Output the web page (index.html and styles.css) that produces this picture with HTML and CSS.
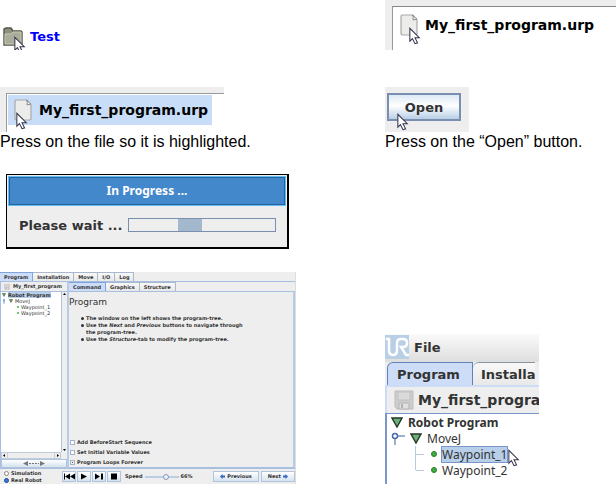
FILE: index.html
```
<!DOCTYPE html>
<html lang="en">

<head>
    <meta charset="UTF-8">
    <meta name="viewport" content="width=device-width, initial-scale=1.0">
    <link rel="stylesheet" href="styles.css">
    <title>Loading a program</title>
</head>

<body>
    <svg class="sprites" width="0" height="0">
        <symbol id="cursor" viewBox="0 0 14 20">
            <path d="M1 1v15l3-3 3 6 3-1-3-6h5z" fill="#fff" stroke="#33334d" stroke-width="1.2" />
        </symbol>
        <symbol id="page" viewBox="0 0 18 22">
            <path d="M2 1h11l4 5v14l-1 1H2l-1-1V2z" fill="#ececea" stroke="#aaa" stroke-width="1.2" />
            <path d="M12 1c2 1 1 4 1 5l4-1z" fill="#fff" stroke="#888" />
        </symbol>
        <symbol id="triangle" viewBox="0 0 12 11">
            <path d="M1 1h10L6 10z" fill="#6fae78" stroke="#1f3824" stroke-width="1.4" />
        </symbol>
        <symbol id="disk" viewBox="0 0 20 20">
            <path d="M1 1h18v18H3l-2-2z" fill="#cdcdcd" stroke="#bdbdbd" />
            <path d="M4 2h12v8H4z" fill="#dadada" stroke="#c2c2c2" />
            <path d="M5 13h10v6H5z" fill="#e0e0e0" stroke="#b4b4b4" />
            <path d="M7 14h2v4H7z" fill="#b4b4b4" />
        </symbol>
    </svg>

    <main class="steps">
        <section class="step">
            <div class="folder">
                <svg class="folder-icon" viewBox="0 0 20 20">
                    <path d="M1 18V2l2-1h5l2 3h8l1 1v13z" fill="#8d917d" stroke="#55584b" stroke-width="1.4" />
                    <path d="M2 7h6l2-2h8v12H2z" fill="#a9ad98" stroke="#c9ccba" />
                </svg>
                <svg class="cursor"><use href="#cursor" /></svg>
                <a class="folder-link" href="#">Test</a>
            </div>
        </section>

        <section class="step">
            <div class="file-list wide">
                <div class="file">
                    <svg class="page-icon"><use href="#page" /></svg>
                    <svg class="cursor"><use href="#cursor" /></svg>
                    <span>My_first_program.urp</span>
                </div>
            </div>
        </section>

        <section class="step">
            <div class="file-list">
                <div class="file selected">
                    <svg class="page-icon"><use href="#page" /></svg>
                    <svg class="cursor"><use href="#cursor" /></svg>
                    <span>My_first_program.urp</span>
                </div>
            </div>
            <p class="caption">Press on the file so it is highlighted.</p>
        </section>

        <section class="step">
            <div class="open-area">
                <button class="open">Open</button>
                <svg class="cursor"><use href="#cursor" /></svg>
            </div>
            <p class="caption">Press on the “Open” button.</p>
        </section>

        <section class="step full">
            <div class="dialog">
                <h2 class="dialog-title">In Progress ...</h2>
                <div class="dialog-body">
                    <span>Please wait ...</span>
                    <div class="progress" role="progressbar" aria-label="Please wait">
                        <div class="progress-bar"></div>
                    </div>
                </div>
            </div>
        </section>

        <section class="step">
            <div class="app">
                <nav class="tabs">
                    <button class="tab active">Program</button>
                    <button class="tab">Installation</button>
                    <button class="tab">Move</button>
                    <button class="tab">I/O</button>
                    <button class="tab">Log</button>
                </nav>
                <div class="app-main">
                    <div class="sidebar">
                        <div class="program-name">
                            <svg class="disk"><use href="#disk" /></svg>
                            <span>My_first_program</span>
                        </div>
                        <div class="tree-box">
                            <ul class="tree">
                                <li class="root"><svg class="triangle"><use href="#triangle" /></svg><span class="picked">Robot Program</span></li>
                                <li class="move">
                                    <svg class="handle" viewBox="0 0 5 5"><path d="M1 0h2v3H1zM1.500 3h1v2h-1z" fill="#8fb0e0" /></svg>
                                    <svg class="triangle"><use href="#triangle" /></svg><span>MoveJ</span>
                                </li>
                                <li class="point"><i class="dot"></i><span>Waypoint_1</span></li>
                                <li class="point"><i class="dot"></i><span>Waypoint_2</span></li>
                            </ul>
                            <div class="scroll-y">
                                <svg viewBox="0 0 5 5"><path d="M1 3h3L2.500 1z" /></svg>
                                <svg viewBox="0 0 5 5"><path d="M1 2h3L2.500 4z" /></svg>
                            </div>
                        </div>
                        <div class="scroll-x">
                            <svg viewBox="0 0 5 5"><path d="M3 1v3L1 2.500z" /></svg>
                            <span class="thumb"></span>
                            <svg viewBox="0 0 5 5"><path d="M2 1v3l2-1.500z" /></svg>
                        </div>
                        <button class="resize" aria-label="Resize">
                            <svg viewBox="0 0 22 5">
                                <path d="M5 0v5L0 2.500zM17 0v5l5-2.500z" fill="#777" />
                                <path d="M6 2.500h10" stroke="#777" stroke-dasharray="2 1" />
                            </svg>
                        </button>
                    </div>
                    <div class="content">
                        <nav class="tabs">
                            <button class="tab active">Command</button>
                            <button class="tab">Graphics</button>
                            <button class="tab">Structure</button>
                        </nav>
                        <div class="command">
                            <h1>Program</h1>
                            <ul class="help">
                                <li>The window on the left shows the program-tree.</li>
                                <li>Use the <em>Next</em> and <em>Previous</em> buttons to navigate through<br>the program-tree.</li>
                                <li>Use the <em>Structure</em>-tab to modify the program-tree.</li>
                            </ul>
                            <div class="options">
                                <label><input type="checkbox">Add BeforeStart Sequence</label>
                                <label><input type="checkbox">Set Initial Variable Values</label>
                                <label><input type="checkbox" checked>Program Loops Forever</label>
                            </div>
                        </div>
                    </div>
                </div>
                <footer class="controls">
                    <div class="modes">
                        <label><input type="radio" name="mode">Simulation</label>
                        <label><input type="radio" name="mode" checked>Real Robot</label>
                    </div>
                    <div class="player">
                        <button aria-label="Rewind"><svg viewBox="0 0 12 8"><path d="M1 1h1v6H1zM7 1v6L2 4zM12 1v6L7 4z" /></svg></button>
                        <button aria-label="Play"><svg viewBox="0 0 12 8"><path d="M3 1v6l6-3z" /></svg></button>
                        <button aria-label="Step"><svg viewBox="0 0 12 8"><path d="M2 1v6l5-3zM8 1h2v6H8z" /></svg></button>
                        <button aria-label="Stop"><svg viewBox="0 0 12 8"><path d="M3 1h6v6H3z" /></svg></button>
                    </div>
                    <label class="speed">Speed <input type="range" value="66"> 66%</label>
                    <div class="pager">
                        <button><svg viewBox="0 0 5 5"><path d="M0 2.500L2.500 0v1.500H5v2H2.500V5z" /></svg>Previous</button>
                        <button>Next<svg viewBox="0 0 5 5"><path d="M5 2.500L2.500 0v1.500H0v2h2.500V5z" /></svg></button>
                    </div>
                </footer>
            </div>
        </section>

        <section class="step bottom">
            <div class="closeup">
                <div class="menu">
                    <svg class="logo" viewBox="0 0 24 24">
                        <path d="M0 0h24v24H0z" fill="#b9cfe6" />
                        <path d="M1 4h3v11q0 5 4 5t4-5V8q0-4 4-4h2q4 0 4 4t-4 4h-2l5 8h3" fill="none" stroke="#fff" stroke-width="2.500" />
                    </svg>
                    <span>File</span>
                </div>
                <nav class="tabs">
                    <button class="tab active">Program</button>
                    <button class="tab">Installa</button>
                </nav>
                <div class="program-name">
                    <svg class="disk"><use href="#disk" /></svg>
                    <span>My_first_progra</span>
                </div>
                <ul class="tree">
                    <li class="root"><svg class="triangle"><use href="#triangle" /></svg><span>Robot Program</span></li>
                    <li class="move">
                        <svg class="handle" viewBox="0 0 14 14">
                            <path d="M4 7v7M6 5h8" stroke="#7a96c8" stroke-width="1.500" />
                            <circle cx="4" cy="5" r="2.500" fill="#fff" stroke="#4a6ea9" stroke-width="1.500" />
                        </svg>
                        <svg class="triangle"><use href="#triangle" /></svg><span>MoveJ</span>
                    </li>
                    <li class="point"><i class="dot"></i><span class="picked">Waypoint_1</span><svg class="cursor"><use href="#cursor" /></svg></li>
                    <li class="point"><i class="dot"></i><span>Waypoint_2</span></li>
                </ul>
            </div>
        </section>
    </main>
</body>

</html>
```
FILE: styles.css
```
* {
    margin: 0;
    padding: 0;
    box-sizing: border-box;
}

body {
    background: #fff;
    color: #000;
    font-family: "DejaVu Sans", sans-serif;
    overflow-x: hidden;
}

button {
    font: inherit;
    color: inherit;
}

ul {
    list-style: none;
}

svg {
    display: block;
    flex: none;
}

.sprites {
    position: absolute;
}

.steps {
    display: grid;
    grid-template-columns: 5fr 3fr;
    row-gap: 23px;
}

.step {
    min-width: 0;
}

.step:nth-child(-n+2) {
    padding-bottom: 14px;
}

.full {
    grid-column: 1 / -1;
}

.bottom {
    align-self: end;
}

.cursor {
    position: absolute;
    width: 12px;
    height: 18px;
}

/* file chooser */
.folder {
    position: relative;
    display: flex;
    align-items: center;
    gap: 7px;
    height: 50px;
    padding: 24px 0 0 3px;
    overflow: hidden;
    font-size: 13px;
    font-weight: bold;
    line-height: 22px;
}

.folder-icon {
    width: 20px;
    height: 20px;
}

.folder .cursor {
    left: 14px;
    top: 36px;
}

.folder-link {
    color: #00f;
    text-decoration: none;
}

.file-list {
    width: 224px;
    height: 45px;
    padding: 6px 0 0 6px;
    background: #eee;
}

.file-list.wide {
    width: 100%;
    height: 50px;
}

.file {
    position: relative;
    display: flex;
    align-items: center;
    gap: 7px;
    height: 100%;
    padding: 0 0 6px 7px;
    border-top: 1px solid #999;
    border-left: 1px solid #999;
    background: #fff;
    font-size: 14px;
    font-weight: bold;
    white-space: nowrap;
}

.wide .file {
    border-top-color: #888;
    padding-bottom: 7px;
    margin-left: 1px;
}

.file.selected {
    background: linear-gradient(#c8ddf7, #c8ddf7) 1px 1px / 204px 30px no-repeat #fff;
}

.page-icon {
    width: 18px;
    height: 22px;
}

.file .cursor {
    left: 9px;
    top: 18px;
}

.wide .file .cursor {
    left: 16px;
    top: 20px;
}

.caption {
    font-family: "Liberation Sans", Arial, sans-serif;
    font-size: 16px;
    line-height: 19px;
}

.open-area {
    position: relative;
    width: 84px;
    height: 45px;
    padding: 6px 2px;
    background: #eee;
}

.open {
    width: 74px;
    height: 28px;
    border: 2px solid #7a8eb0;
    background: linear-gradient(#dce8f4, #fff 45%, #b8cfe5);
    color: #333;
    font-size: 13px;
    font-weight: bold;
}

.open-area .cursor {
    left: 12px;
    top: 26px;
}

/* progress dialog */
.dialog {
    width: 283px;
    margin-left: 6px;
    padding: 2px;
    border: 1px solid #000;
    border-right-width: 2px;
    border-bottom-width: 2px;
    background: #eee;
    font-weight: bold;
}

.dialog-title {
    border: 1px solid #2a5f9e;
    outline: 1px solid #5fc0f5;
    background: #4488cc;
    color: #fff;
    font-family: "Noto Sans", sans-serif;
    font-size: 12px;
    line-height: 26px;
    text-align: center;
}

.dialog-body {
    display: flex;
    align-items: center;
    gap: 6px;
    height: 40px;
    padding: 0 9px 0 10px;
    color: #333;
    font-size: 13px;
    white-space: nowrap;
}

.progress {
    flex: 1;
    height: 14px;
    border: 1px solid #7a8fae;
}

.progress-bar {
    width: 24px;
    height: 100%;
    margin-left: 49px;
    background: #a3b8cc;
}

/* tabs and tree, shared by the full window and the close-up */
.tabs {
    display: flex;
}

.tab {
    border: 1px solid #a9b8cc;
    border-width: 1px 1px 0 0;
    background: linear-gradient(#f8f8f8, #e8e8e8);
    color: #333;
}

.tab.active {
    border-color: #7fa3dc;
    background: #cdddf7;
}

.program-name,
.tree li {
    display: flex;
    align-items: center;
    white-space: nowrap;
}

.dot {
    border-radius: 50%;
    background: #3fae3f;
}

.picked {
    background: #b8cfe9;
}

/* full window */
.app {
    width: 296px;
    background: #eee;
    color: #333;
    font-size: 5px;
    line-height: 7px;
    font-weight: bold;
    border-right: 1px solid #ddd;
}

.app .tab {
    height: 9px;
    padding: 0 4px;
    line-height: 8px;
}

.app-main {
    display: flex;
    height: 188px;
    border: 1px solid #a8bfe0;
    border-right: 0;
}

.sidebar {
    display: flex;
    flex-direction: column;
    width: 66px;
}

.app .program-name {
    gap: 3px;
    height: 9px;
    padding-left: 3px;
}

.app .disk {
    width: 6px;
    height: 6px;
}

.tree-box {
    display: flex;
    flex: 1;
    justify-content: space-between;
    border-top: 1px solid #a8bfe0;
    background: #fff;
}

.app .tree {
    padding-left: 1px;
    font-weight: normal;
    line-height: 6px;
}

.app .tree li {
    gap: 2px;
    height: 6px;
}

.app .triangle {
    width: 4px;
    height: 4px;
}

.app .handle {
    width: 5px;
    height: 5px;
}

.app .root {
    font-weight: bold;
}

.app .point {
    padding-left: 15px;
}

.app .dot {
    width: 2px;
    height: 2px;
}

.scroll-y,
.scroll-x {
    display: flex;
    justify-content: space-between;
    background: #eee;
}

.scroll-y {
    flex-direction: column;
    border-left: 1px solid #b0c0d8;
}

.scroll-y svg,
.scroll-x svg {
    width: 5px;
    height: 5px;
}

.scroll-x {
    border: 1px solid #c0cbdc;
    margin-right: 6px;
}

.thumb {
    flex: 1;
    border: 1px solid #ccd;
    border-width: 0 1px;
}

.resize {
    display: flex;
    align-items: center;
    justify-content: center;
    height: 9px;
    border: 1px solid #b0c4de;
    background: linear-gradient(#fff, #d5e2ef);
}

.resize svg {
    width: 22px;
    height: 5px;
}

.content {
    display: flex;
    flex: 1;
    flex-direction: column;
    border-left: 2px solid #b8cbe6;
}

.command {
    display: flex;
    flex: 1;
    flex-direction: column;
    border-top: 1px solid #a8bfe0;
    border-right: 2px solid #b8cbe6;
    border-bottom: 1px solid #a8bfe0;
}

.command h1 {
    padding-top: 4px;
    font-size: 9px;
    font-weight: normal;
    line-height: 12px;
}

.help {
    padding: 7px 0 0 17px;
}

.help li {
    position: relative;
}

.help li::before {
    position: absolute;
    left: -5px;
    top: 2px;
    width: 3px;
    height: 3px;
    border-radius: 50%;
    background: #333;
    content: "";
}

.options {
    display: flex;
    flex-direction: column;
    gap: 3px;
    margin-top: auto;
    padding: 0 0 1px 1px;
}

.options label,
.modes label {
    display: flex;
    align-items: center;
    gap: 2px;
}

.options input,
.modes input {
    appearance: none;
    width: 5px;
    height: 5px;
    border: 1px solid #9fb4d0;
    background: #fff;
}

.options input:checked {
    background: #557;
    background-clip: content-box;
    padding: 1px;
}

.modes input {
    border-color: #888;
    border-radius: 50%;
}

.modes input:checked {
    border-color: #1b4a9e;
    background: #3a78d8;
}

.controls {
    display: flex;
    align-items: center;
    height: 15px;
    padding-left: 4px;
}

.modes {
    width: 58px;
}

.player {
    display: flex;
    gap: 1px;
}

.player button {
    width: 14px;
    height: 11px;
    border: 1px solid #b0c4de;
    background: linear-gradient(#fff, #d5e2ef);
}

.player svg {
    width: 12px;
    height: 9px;
}

.speed {
    display: flex;
    align-items: center;
    gap: 2px;
    margin-left: 4px;
}

.speed input {
    appearance: none;
    width: 34px;
    height: 2px;
    background: #b8cfe5;
}

.speed input::-webkit-slider-thumb {
    appearance: none;
    width: 6px;
    height: 6px;
    border: 1px solid #889bb5;
    border-radius: 50%;
    background: #eef;
}

.pager {
    display: flex;
    gap: 2px;
    margin-left: auto;
}

.pager button {
    display: flex;
    align-items: center;
    gap: 2px;
    height: 11px;
    padding: 0 6px;
    border: 1px solid #b0c4de;
    background: linear-gradient(#fff, #d5e2ef);
}

.pager svg {
    width: 5px;
    height: 5px;
    fill: #3465c0;
}

/* close-up */
.closeup {
    width: 154px;
    overflow: hidden;
    background: #eee;
    color: #333;
    font-size: 13px;
    font-weight: bold;
}

.menu {
    display: flex;
    align-items: center;
    gap: 5px;
    height: 28px;
    padding-bottom: 2px;
    background: linear-gradient(#fafafa, #dedede);
}

.logo {
    width: 24px;
    height: 24px;
}

.closeup .tabs {
    height: 25px;
    padding-left: 2px;
    border-bottom: 2px solid #cdddf7;
}

.closeup .tab {
    padding: 0 12px 0 9px;
    border-color: #5f82bd;
    border-width: 1px 1px 0 1px;
    border-top-left-radius: 6px;
}

.closeup .tab + .tab {
    padding: 0 0 0 8px;
    border-color: #8a93a0;
    border-width: 1px 0 0;
}

.closeup .program-name {
    gap: 4px;
    height: 26px;
    padding-left: 7px;
    border-left: 2px solid #cdddf7;
    font-size: 14px;
}

.closeup .disk {
    width: 20px;
    height: 20px;
}

.closeup .tree {
    padding: 0 0 6px 4px;
    border: 1px solid #7a96c8;
    border-width: 1px 0 0 2px;
    background: #fff;
    font-family: "Noto Sans", sans-serif;
    font-size: 12px;
    font-weight: normal;
    line-height: 15px;
}

.closeup .tree li {
    position: relative;
    height: 16px;
    gap: 5px;
}

.closeup .root {
    font-weight: bold;
}

.closeup .triangle {
    width: 12px;
    height: 11px;
}

.closeup .handle {
    width: 14px;
    height: 14px;
}

.closeup .point {
    margin-left: 24px;
    border-left: 1px solid #b8c8e0;
    padding-left: 15px;
}

.closeup .point::before {
    position: absolute;
    left: 0;
    top: 8px;
    width: 8px;
    border-top: 1px solid #b8c8e0;
    content: "";
}

.closeup .point:last-child {
    border-image: linear-gradient(#b8c8e0 50%, transparent 50%) 1;
}

.closeup .dot {
    width: 6px;
    height: 6px;
    border: 1px solid #2a7a2a;
}

.closeup .picked {
    outline: 1px solid #7a96c8;
}

.closeup .cursor {
    left: 92px;
    top: 3px;
}
```
